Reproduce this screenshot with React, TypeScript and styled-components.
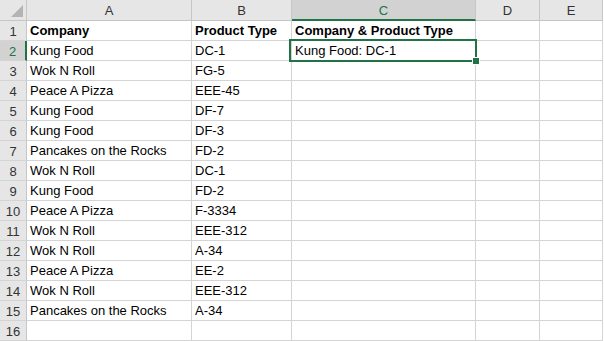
import React, { FC } from 'react'
import styled, { createGlobalStyle, css } from 'styled-components'

const rows: [string, string, string][] = [
  ['Company', 'Product Type', 'Company & Product Type'],
  ['Kung Food', 'DC-1', 'Kung Food: DC-1'],
  ['Wok N Roll', 'FG-5', ''],
  ['Peace A Pizza', 'EEE-45', ''],
  ['Kung Food', 'DF-7', ''],
  ['Kung Food', 'DF-3', ''],
  ['Pancakes on the Rocks', 'FD-2', ''],
  ['Wok N Roll', 'DC-1', ''],
  ['Kung Food', 'FD-2', ''],
  ['Peace A Pizza', 'F-3334', ''],
  ['Wok N Roll', 'EEE-312', ''],
  ['Wok N Roll', 'A-34', ''],
  ['Peace A Pizza', 'EE-2', ''],
  ['Wok N Roll', 'EEE-312', ''],
  ['Pancakes on the Rocks', 'A-34', ''],
  ['', '', ''],
]

const columns = ['A', 'B', 'C', 'D', 'E']
const activeCol = 2
const activeRow = 2

const App: FC = () => (
  <>
    <GlobalStyle />
    <Sheet>
      <Corner>
        <CornerTriangle />
      </Corner>
      {columns.map((c, i) => (
        <ColHeader key={c} active={i === activeCol}>
          {c}
        </ColHeader>
      ))}
      {rows.map((r, ri) => {
        const n = ri + 1
        return (
          <React.Fragment key={n}>
            <RowHeader active={n === activeRow}>{n}</RowHeader>
            {columns.map((c, ci) => (
              <Cell key={c} bold={n === 1}>
                {r[ci] ?? ''}
                {n === activeRow && ci === activeCol && (
                  <Selection>
                    <FillHandle />
                  </Selection>
                )}
              </Cell>
            ))}
          </React.Fragment>
        )
      })}
    </Sheet>
  </>
)

export default App

const GlobalStyle = createGlobalStyle`
  html, body {
    margin: 0;
    padding: 0;
    background: #fff;
  }
  * {
    box-sizing: border-box;
  }
`

const font = css`
  font-family: 'Liberation Sans', Arial, sans-serif;
  font-size: 13px;
`

const Sheet = styled.div`
  display: grid;
  grid-template-columns: 27px 165px 100px 184px 64px 63px;
  grid-template-rows: 21px repeat(16, 20px);
  width: 604px;
  ${font};
`

const headerBase = css`
  background: #e6e6e6;
  color: #333;
  display: flex;
  align-items: center;
  justify-content: center;
  border-right: 1px solid #c6c6c6;
  border-bottom: 1px solid #c6c6c6;
`

const Corner = styled.div`
  ${headerBase};
  position: relative;
`

const CornerTriangle = styled.div`
  position: absolute;
  right: 3px;
  bottom: 3px;
  width: 0;
  height: 0;
  border-left: 12px solid transparent;
  border-bottom: 12px solid #b4b4b4;
`

const ColHeader = styled.div<{ active?: boolean }>`
  ${headerBase};
  padding-top: 1px;
  ${(p) =>
    p.active &&
    css`
      background: #d2d2d2;
      color: #217346;
      border-bottom: 2px solid #217346;
      padding-top: 2px;
    `}
`

const RowHeader = styled.div<{ active?: boolean }>`
  ${headerBase};
  border-bottom: 1px solid #d4d4d4;
  padding-top: 1px;
  ${(p) =>
    p.active &&
    css`
      background: #d2d2d2;
      color: #217346;
      border-right: 2px solid #217346;
    `}
`

const Cell = styled.div<{ bold?: boolean }>`
  position: relative;
  display: flex;
  align-items: flex-end;
  padding: 0 0 2px 3px;
  white-space: nowrap;
  color: #000;
  border-right: 1px solid #d4d4d4;
  border-bottom: 1px solid #d4d4d4;
  font-weight: ${(p) => (p.bold ? 700 : 400)};
`

const Selection = styled.div`
  position: absolute;
  z-index: 2;
  left: -3px;
  top: -2px;
  right: -2px;
  bottom: -2px;
  border: 2px solid #217346;
  pointer-events: none;
`

const FillHandle = styled.div`
  position: absolute;
  right: -5px;
  bottom: -5px;
  width: 8px;
  height: 8px;
  background: #217346;
  border: 1px solid #fff;
`
